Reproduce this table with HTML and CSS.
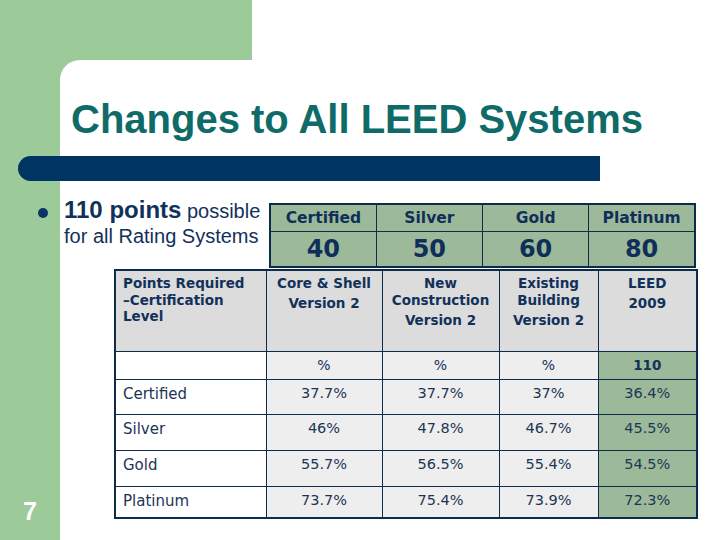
FILE: index.html
```html
<!DOCTYPE html>
<html>
<head>
<meta charset="utf-8">
<link rel="stylesheet" href="styles.css">
</head>
<body>
<div class="slide">
  <div class="band"></div>
  <div class="side"><span class="page-num">7</span></div>
  <div class="panel">
    <h1 class="title">Changes to All LEED Systems</h1>
    <div class="rule"></div>
    <div class="summary">
      <span class="dot"></span>
      <p class="lead"><b>110 points</b> possible<br>for all Rating Systems</p>
      <table class="levels">
        <tr class="lv-head"><td>Certified</td><td>Silver</td><td>Gold</td><td>Platinum</td></tr>
        <tr class="lv-num"><td>40</td><td>50</td><td>60</td><td>80</td></tr>
      </table>
    </div>
    <table class="grid">
      <colgroup><col class="c1"><col class="c2"><col class="c3"><col class="c4"><col class="c5"></colgroup>
      <tr class="g-head">
        <td class="label">Points Required<br>–Certification<br>Level</td>
        <td><span class="ln">Core &amp; Shell</span><span class="ver">Version 2</span></td>
        <td><span class="ln">New<br>Construction</span><span class="ver">Version 2</span></td>
        <td><span class="ln">Existing<br>Building</span><span class="ver">Version 2</span></td>
        <td><span class="ln">LEED</span><span class="ver">2009</span></td>
      </tr>
      <tr class="g-unit">
        <td class="label"></td><td>%</td><td>%</td><td>%</td><td class="hl"><b>110</b></td>
      </tr>
      <tr class="g-row r1">
        <td class="label">Certified</td><td>37.7%</td><td>37.7%</td><td>37%</td><td class="hl">36.4%</td>
      </tr>
      <tr class="g-row r2">
        <td class="label">Silver</td><td>46%</td><td>47.8%</td><td>46.7%</td><td class="hl">45.5%</td>
      </tr>
      <tr class="g-row r3">
        <td class="label">Gold</td><td>55.7%</td><td>56.5%</td><td>55.4%</td><td class="hl">54.5%</td>
      </tr>
      <tr class="g-row r4">
        <td class="label">Platinum</td><td>73.7%</td><td>75.4%</td><td>73.9%</td><td class="hl">72.3%</td>
      </tr>
    </table>
  </div>
</div>
</body>
</html>
```
FILE: styles.css
```css
* { box-sizing: border-box; }
html, body { margin: 0; padding: 0; }
body { width: 720px; height: 540px; overflow: hidden; background: #fff; }

.slide {
  width: 720px;
  height: 540px;
  display: grid;
  grid-template-columns: 60px 660px;
  grid-template-rows: 60px 480px;
  background: linear-gradient(#9dca99, #9dca99) 0 0 / 80px 80px no-repeat, #fff;
  font-family: "Liberation Sans", Arial, sans-serif;
}

.band {
  grid-column: 1 / 3;
  grid-row: 1;
  width: 252px;
  background: #9dca99;
}

.side {
  grid-column: 1;
  grid-row: 2;
  background: #9dca99;
  display: flex;
  flex-direction: column;
  justify-content: flex-end;
  align-items: center;
  padding-bottom: 15px;
}
.page-num {
  color: #fff;
  font-weight: bold;
  font-size: 25px;
  line-height: 28px;
}

.panel {
  grid-column: 2;
  grid-row: 2;
  background: #fff;
  border-top-left-radius: 20px;
  padding-right: 24px;
  display: flex;
  flex-direction: column;
}

.title {
  margin: 36px 0 0 11px;
  font-size: 40px;
  line-height: 46px;
  font-weight: bold;
  color: #0e6b67;
  white-space: nowrap;
}

.rule {
  margin: 14px 0 0 -42px;
  width: 582px;
  height: 25px;
  background: #003462;
  border-radius: 13px 0 0 13px;
}

.summary {
  margin: 22px 0 0 -22px;
  display: flex;
  align-items: flex-start;
}
.dot {
  flex: none;
  width: 10px;
  height: 10px;
  margin-top: 5px;
  border-radius: 50%;
  background: #0b3566;
}
.lead {
  flex: 1;
  margin: -6px 0 0 16px;
  font-size: 20px;
  line-height: 25px;
  color: #12315a;
  white-space: nowrap;
}
.lead b { font-size: 24px; }

.levels {
  flex: none;
  width: 427px;
  border-collapse: collapse;
  border: 2px solid #0d2b4b;
  background: #9cba99;
  color: #0f2f5a;
  font-family: "DejaVu Sans", Verdana, sans-serif;
  font-weight: bold;
  text-align: center;
}
.levels td {
  border: 1px solid #0d2b4b;
  padding: 0;
  width: 25%;
}
.lv-head td { height: 27px; font-size: 15.5px; }
.lv-num td { height: 36px; font-size: 24px; }

.grid {
  margin: 1px 0 0 54px;
  width: 582px;
  border-collapse: collapse;
  border: 2px solid #0d2b4b;
  table-layout: fixed;
  font-family: "DejaVu Sans", Verdana, sans-serif;
  color: #12315a;
  text-align: center;
}
.c1 { width: 151px; }
.c2 { width: 116px; }
.c3 { width: 117px; }
.c4 { width: 99px; }
.c5 { width: 99px; }

.grid td {
  border: 1px solid #0d2b4b;
  background: #eeeeee;
  vertical-align: top;
  padding: 0;
}
.grid td.label {
  background: #fff;
  text-align: left;
  padding-left: 7px;
}
.grid td.hl { background: #9cba99; }

.g-head td {
  height: 81px;
  background: #dcdcdc;
  font-size: 13.5px;
  font-weight: bold;
  line-height: 16.5px;
  padding-top: 4px;
}
.g-head td.label { background: #dcdcdc; }
.g-head .ln { display: block; }
.g-head .ver { display: block; margin-top: 3.5px; }

.g-unit td {
  height: 28px;
  font-size: 14px;
  vertical-align: middle;
}
.g-unit td b { font-size: 13.5px; }

.g-row td {
  font-size: 14.5px;
  line-height: 18px;
  padding-top: 4px;
  color: #1d3555;
}
.g-row td.label { font-size: 15px; padding-top: 5px; }
.r1 td { height: 35px; }
.r2 td { height: 36px; }
.r3 td { height: 36px; }
.r4 td { height: 32px; }
```
